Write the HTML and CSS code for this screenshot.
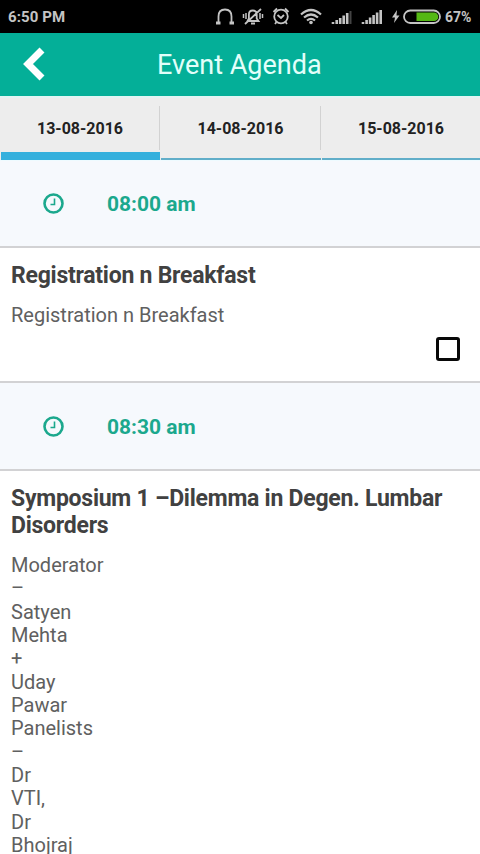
FILE: index.html
```
<!DOCTYPE html>
<html lang="en">
<head>
<meta charset="utf-8">
<title>Event Agenda</title>
<link rel="stylesheet" href="styles.css">
</head>
<body>
<div class="status">
  <span class="clock">6:50 PM</span>
  <svg class="status-icons" width="229" height="33" viewBox="212 0 229 33" fill="none" stroke="#c4c4c4" stroke-width="1.8">
    <path d="M218.500 22v-5.500q0-7 6.500-7t6.500 7v5.500"/>
    <path d="M216 23h4.500M229.500 23h4.500" stroke-width="3"/>
    <path d="M247.500 21h11l-1.800-2.500v-4q0-4-3.900-4t-3.900 4v4zM251 23.500h4M261 9l-16 15" stroke-width="1.800"/>
    <path d="M246 13v6M260 13v6M243.500 14v4M262.500 14v4" stroke-width="1.500"/>
    <circle cx="281" cy="16.500" r="6.800"/>
    <path d="M277.500 15l3.500 3 3-3M273.500 12l3.500-3.500M288.500 12l-3.500-3.500M276.500 22l-1.500 2M285.500 22l1.500 2"/>
    <path d="M301 14.500q10-9 20 0M304 17.500q7-6 14 0M307 20.500q4-3.300 8 0" stroke-width="2.200"/>
    <circle cx="311" cy="22.500" r="1.800" fill="#c4c4c4" stroke="none"/>
    <g stroke-width="2.600">
      <path d="M333 24v-2M336.700 24v-4M340.200 24v-6M343.700 24v-8.500M347.200 24V13"/>
      <path d="M350.500 24V11" stroke="#444" stroke-width="2"/>
      <path d="M363 24v-2M366.600 24v-4M370.100 24v-6.500M373.600 24v-9M377.100 24v-11.500M380.700 24V10"/>
    </g>
    <path d="M397 10l-5 7.500h3l-1 5.500 5.500-7.500h-3z" fill="#c4c4c4" stroke="none"/>
    <rect x="404" y="10.500" width="36" height="12.500" rx="6.250"/>
    <path d="M416.500 12.500H434a4.300 4.300 0 0 1 0 8.600H416.500z" fill="#54b814" stroke="none"/>
  </svg>
  <span class="percent">67%</span>
</div>
<header class="header">
  <svg class="back" width="24" height="36" viewBox="0 0 24 36" fill="none" stroke="#fff" stroke-width="7"><path d="M20 4L6 18l14 14"/></svg>
  <h1 class="title">Event Agenda</h1>
</header>
<nav class="tabs">
  <div class="tab active"><span>13-08-2016</span></div>
  <div class="tab"><span>14-08-2016</span></div>
  <div class="tab"><span>15-08-2016</span></div>
</nav>
<main>
  <div class="time">
    <svg class="time-icon" width="22" height="22" viewBox="0 0 22 22" fill="none" stroke="#1ba88d"><circle cx="10.500" cy="10.500" r="9" stroke-width="2.600"/><path d="M11.500 5.500v6H7.500" stroke-width="1.600"/></svg>
    <span>08:00 am</span>
  </div>
  <section class="session first">
    <h2>Registration n Breakfast</h2>
    <p>Registration n Breakfast</p>
    <div class="check"></div>
  </section>
  <div class="time">
    <svg class="time-icon" width="22" height="22" viewBox="0 0 22 22" fill="none" stroke="#1ba88d"><circle cx="10.500" cy="10.500" r="9" stroke-width="2.600"/><path d="M11.500 5.500v6H7.500" stroke-width="1.600"/></svg>
    <span>08:30 am</span>
  </div>
  <section class="session">
    <h2>Symposium 1 –Dilemma in Degen. Lumbar<br>Disorders</h2>
    <p>Moderator<br>–<br>Satyen<br>Mehta<br>+<br>Uday<br>Pawar<br>Panelists<br>–<br>Dr<br>VTI,<br>Dr<br>Bhojraj</p>
  </section>
</main>
</body>
</html>
```
FILE: styles.css
```
* { box-sizing: border-box; }
body { margin: 0; height: 854px; overflow: hidden; background: #fff; font-family: Roboto, "Liberation Sans", sans-serif; }
.status { display: flex; align-items: center; height: 33px; padding: 0 8px; background: #000; color: #c4c4c4; font-size: 15px; font-weight: 700; white-space: nowrap; }
.clock { width: 204px; padding-top: 1px; letter-spacing: 0.1px; }
.status-icons { flex: none; }
.percent { margin-left: 4px; padding-top: 1px; font-size: 14px; }
.header { display: flex; align-items: center; height: 63px; padding-left: 22px; background: #04af98; }
.back { flex: none; margin-bottom: 1px; }
.title { margin: 0 0 0 111px; color: #e2fffa; font-size: 27px; font-weight: 400; line-height: 32px; white-space: nowrap; }
.tabs { display: grid; grid-template-columns: 160px 161px 1fr; height: 65px; background: #ededed; border-top: 2px solid #e2f5f3; border-bottom: 1px solid #eefbff; }
.tab { display: flex; margin-left: 1px; border-bottom: 2px solid #61aec9; color: #222; font-size: 16px; font-weight: 700; }
.tab span { display: flex; flex: 1; align-items: center; justify-content: center; height: 44px; margin-top: 8px; padding-top: 1px; border-right: 1px solid #d2d2d2; }
.tab.active { border-bottom: 8px solid #35b0dd; }
.tab:last-child span { border: 0; }
.time { display: flex; align-items: center; height: 87px; padding-left: 43px; background: #f6f9fd; border-bottom: 2px solid #d2d2d4; color: #1ba88d; font-size: 21px; font-weight: 700; }
.time span { margin-left: 42px; }
.session { padding: 14px 11px 0; }
.session + .time { height: 88px; padding-top: 1px; }
.first { height: 135px; border-bottom: 2px solid #d2d2d4; }
.session h2 { margin: 0; color: #414141; font-size: 23px; font-weight: 700; line-height: 27px; letter-spacing: -0.250px; white-space: nowrap; }
.session p { margin: 15px 0 0; color: #606060; font-size: 20px; line-height: 23.340px; }
.check { width: 24px; height: 24px; margin: 10px 9px 0 auto; border: 3px solid #080808; border-radius: 3px; }
```
